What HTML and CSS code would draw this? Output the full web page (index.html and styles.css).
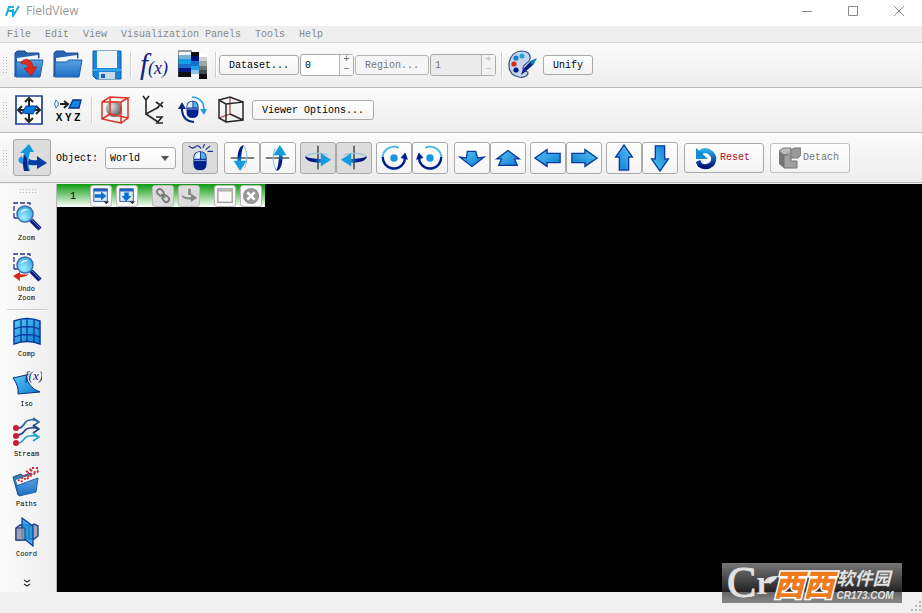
FILE: index.html
```html
<!DOCTYPE html>
<html lang="en">
<head>
<meta charset="utf-8">
<title>FieldView</title>
<link rel="stylesheet" href="styles.css">
</head>
<body>
<svg class="defs" aria-hidden="true">
  <defs>
    <linearGradient id="sky" x1="0" y1="0" x2="1" y2="1"><stop offset="0" stop-color="#5cc8f4"/><stop offset="1" stop-color="#0878d0"/></linearGradient>
    <linearGradient id="folder" x1="0" y1="0" x2="0" y2="1"><stop offset="0" stop-color="#5aa0e0"/><stop offset="1" stop-color="#1c70c8"/></linearGradient>
    <linearGradient id="spin" x1="0" y1="1" x2="1" y2="0"><stop offset="0" stop-color="#001c88"/><stop offset="1" stop-color="#28b0ee"/></linearGradient>
    <linearGradient id="reset" x1="0" y1="1" x2="0" y2="0"><stop offset="0" stop-color="#001478"/><stop offset="1" stop-color="#28a8e8"/></linearGradient>
    <linearGradient id="sweep" x1="0" y1="0" x2="1" y2="0"><stop offset="0" stop-color="#001878"/><stop offset=".6" stop-color="#001e8a"/><stop offset="1" stop-color="#149be0"/></linearGradient>
    <radialGradient id="ball" cx=".35" cy=".35" r=".7"><stop offset="0" stop-color="#e4e4e4"/><stop offset="1" stop-color="#5c5c5c"/></radialGradient>
    <radialGradient id="lens" cx=".4" cy=".7" r=".8"><stop offset="0" stop-color="#9ff0ff"/><stop offset="1" stop-color="#2b9ee4"/></radialGradient>
    <symbol id="bigfolder" viewBox="0 0 30 30">
      <path d="M1 27V3l2-2h8l2 2h12v5h-3l-19 2z" fill="#2a64b0" stroke="#1b4f98"/>
      <path d="M3 8l21-3v7H3z" fill="#eef6ff"/>
      <path d="M2 12h11l3-2h13l-3 17H2z" fill="url(#folder)" stroke="#1d5aa8"/>
    </symbol>
    <symbol id="magnifier" viewBox="0 0 30 30">
      <path d="M2 17V2h16v6M2 17h4" fill="none" stroke="#26308c" stroke-width="1.3" stroke-dasharray="5 2"/>
      <path d="M19 19l9 9" stroke="#0a1c80" stroke-width="4.500"/>
      <path d="M20 19l8 8" stroke="#5878d0"/>
      <circle cx="13" cy="13" r="8" fill="url(#lens)" stroke="#3f6fa8" stroke-width="1.5"/>
      <path d="M8 12q3-6 9-3-4 0-9 3" fill="#d8f6ff"/>
    </symbol>
    <symbol id="arrow" viewBox="0 0 30 30">
      <path d="M1 15L14 6v4h14v10H14v4z" fill="url(#sky)" stroke="#0838a0" stroke-width="1.4"/>
    </symbol>
    <symbol id="orbit" viewBox="0 0 30 30">
      <path d="M15 2v25" stroke="#555" stroke-width="1.800"/>
      <path d="M2 13q10-6 24-1" stroke="#90c4e0" stroke-width="1.200" fill="none"/>
      <path d="M1 13q1 7 18 7v-4Q7 16 1 13z" fill="url(#sweep)"/>
      <path d="M18 10l11 7-11 7z" fill="#149be0"/>
    </symbol>
    <symbol id="turn" viewBox="0 0 30 30">
      <path d="M20 4A12 12 0 1 0 26 19q1-3 1-6" fill="none" stroke="url(#sky)" stroke-width="2"/>
      <path d="M3 14A12 12 0 0 0 26 19l1-7" fill="none" stroke="#001c88" stroke-width="2.400"/>
      <path d="M22 15l5-6 3 8z" fill="#001c88"/>
      <circle cx="15" cy="15" r="4" fill="#1a96e0"/>
    </symbol>
    <symbol id="mouse" viewBox="0 0 20 26">
      <path d="M2 10q0-8 8-8t8 8v7q0 8-8 8t-8-8z" fill="#00248c"/>
      <path d="M3 11V9q1-6 7-6v8z" fill="#d9f2fc"/><path d="M11 3q6 0 6 8h-6z" fill="#54b4e8"/>
      <path d="M3 13h14" stroke="#b0cff0"/>
    </symbol>
  </defs>
</svg>
<div class="window">
  <header class="titlebar">
    <svg class="logo" viewBox="0 0 15 12"><path d="M1 11L4 2h5M3 6h4M8 4L8 11 14 1" fill="none" stroke="#18aede" stroke-width="2"/></svg>
    <h1>FieldView</h1>
    <div class="window-buttons">
      <button aria-label="Minimize"><svg viewBox="0 0 12 12"><path d="M1 6.500h10" /></svg></button>
      <button aria-label="Maximize"><svg viewBox="0 0 12 12"><path d="M1.500 1.500h9v9h-9z"/></svg></button>
      <button aria-label="Close"><svg viewBox="0 0 12 12"><path d="M1 1l10 10M11 1L1 11"/></svg></button>
    </div>
  </header>
  <nav class="menu"><a href="#">File</a><a href="#">Edit</a><a href="#">View</a><a href="#">Visualization Panels</a><a href="#">Tools</a><a href="#">Help</a></nav>

  <div class="toolbar">
    <span class="grip"></span>
    <div class="icons">
      <button class="icon" aria-label="Import data"><svg viewBox="0 0 30 30"><use href="#bigfolder"/><path d="M7 12q6-6 11 1l1 4h4l-6 9-7-8h4q0-5-7-4z" fill="#e0281c" stroke="#a81818" stroke-width=".6"/></svg></button>
      <button class="icon" aria-label="Open"><svg viewBox="0 0 30 30"><use href="#bigfolder"/></svg></button>
      <button class="icon" aria-label="Save"><svg viewBox="0 0 30 30"><path d="M1 1h28v28H4l-3-3z" fill="#1b86d8" stroke="#0a5cae"/><path d="M5 1h20v17H5z" fill="#eff3f5"/><path d="M1 19h28v2H1z" fill="#35a5e8"/><path d="M7 22h16v7H7z" fill="#c9dbe8"/><path d="M9 24h4v4H9z" fill="#1a62b0"/></svg></button>
    </div>
    <span class="sep"></span>
    <div class="icons">
      <button class="icon fx" aria-label="Formula">f<small>(x)</small></button>
      <button class="icon" aria-label="Colormap"><svg viewBox="0 0 30 30"><path d="M0 1h14v4H0z" fill="#eef6fa"/><path d="M0 5h14v4H0z" fill="#7bb0d8"/><path d="M0 9h14v5H0z" fill="#12a0e8"/><path d="M0 14h14v4H0z" fill="#1b70d0"/><path d="M0 18h14v4H0z" fill="#001c88"/><path d="M0 22h14v5H0z" fill="#101014"/><path d="M13 2h8v4h-8z" fill="#101014"/><path d="M13 6h8v5h-8z" fill="#00107c"/><path d="M13 11h8v5h-8z" fill="#1470d0"/><path d="M13 16h8v4h-8z" fill="#20a2e8"/><path d="M13 20h8v4h-8z" fill="#8cc4e8"/><path d="M13 24h8v4h-8z" fill="#f4f8fa"/><path d="M21 3h8v4h-8z" fill="#fff"/><path d="M21 7h8v4h-8z" fill="#d0d0d0"/><path d="M21 11h8v5h-8z" fill="#a0a6a6"/><path d="M21 16h8v4h-8z" fill="#6d7474"/><path d="M21 20h8v4h-8z" fill="#444c4c"/><path d="M21 24h8v5h-8z" fill="#0c0c0c"/><path d="M0 27V1h14" fill="none" stroke="#444"/></svg></button>
    </div>
    <span class="sep"></span>
    <div class="fields">
      <button class="push dataset">Dataset...</button>
      <div class="spinner"><input aria-label="Dataset number" value="0"><div class="steps"><button aria-label="Increase dataset">+</button><button aria-label="Decrease dataset">−</button></div></div>
      <button class="push region" disabled>Region...</button>
      <div class="spinner wide off"><input aria-label="Region number" value="1" disabled><div class="steps"><button aria-label="Increase region" disabled>+</button><button aria-label="Decrease region" disabled>−</button></div></div>
    </div>
    <span class="sep"></span>
    <button class="icon" aria-label="Palette"><svg viewBox="0 0 30 30"><path d="M1 13Q3 2 13 1q10 0 9 8c-1 5-7 4-7 9 0 4 5 2 5 5s-5 5-9 4Q0 25 1 13z" fill="#c8d6ec" stroke="#33508c" stroke-width="1.2"/><circle cx="8" cy="8" r="2.600" fill="#167cd0"/><circle cx="14" cy="6" r="2.500" fill="#1ea2dd"/><circle cx="6" cy="14" r="2.600" fill="#dc2418"/><circle cx="8" cy="20" r="2.600" fill="#001c88"/><path d="M13 25l2-6 8-8 3 3-9 8z" fill="#071e80"/><path d="M22 11l7-3-3 6-2 1z" fill="#167fae"/></svg></button>
    <button class="push unify">Unify</button>
  </div>

  <div class="toolbar">
    <span class="grip"></span>
    <div class="icons">
      <button class="icon" aria-label="Move object"><svg viewBox="0 0 30 30"><path d="M2 1h26v28H2z" fill="#fff" stroke="#203fa0" stroke-width="1.700"/><path d="M15 3v24M4 15h22M11 7l4-4 4 4M11 23l4 4 4-4M8 11l-4 4 4 4M22 11l4 4-4 4" fill="none" stroke="#252525" stroke-width="2"/><path d="M8 18l4-7h11l-4 8z" fill="#087ade" stroke="#063b9c"/></svg></button>
      <button class="icon xyz" aria-label="Align X Y Z"><svg viewBox="0 0 30 15"><path d="M3 3q-3 4 0 8M3 3q5 4 0 8" fill="none" stroke="#2586b8"/><path d="M7 7h7M11 4l4 3-4 4" fill="none" stroke="#222" stroke-width="2"/><path d="M16 11l4-8h8l-2 8z" fill="#1483e4" stroke="#092f86" stroke-width="1.300"/></svg><span>X Y Z</span></button>
    </div>
    <span class="sep"></span>
    <div class="icons">
      <button class="icon" aria-label="Outline"><svg viewBox="0 0 30 30"><circle cx="14" cy="14" r="8" fill="url(#ball)"/><path d="M2 7h19v21L2 24zM2 7l8-5 18 1-7 4M28 3v20l-7 5M10 2v17l-8 5M10 19l18 4" fill="none" stroke="#dc3428" stroke-width="1.500"/></svg></button>
      <button class="icon" aria-label="Axes"><svg viewBox="0 0 30 30"><path d="M7 5v14l13-7M7 19l12 8M4 1l3 4 3-4M17 7l7 5M24 7l-6 6M17 22h6l-5 6h6" fill="none" stroke="#252525" stroke-width="1.600"/></svg></button>
      <button class="icon" aria-label="Mouse rotation"><svg viewBox="0 0 30 30"><use href="#mouse" x="7" y="4" width="15" height="20"/><path d="M26 15q0-12-12-13" fill="none" stroke="#1ba2dd" stroke-width="1.500"/><path d="M22 14h7l-3 6z" fill="#1ba2dd"/><path d="M4 11q-1 15 12 16" fill="none" stroke="#08268a" stroke-width="2"/><path d="M0 14l4-7 4 7z" fill="#08268a"/></svg></button>
      <button class="icon" aria-label="Perspective"><svg viewBox="0 0 30 30"><path d="M2 23l11-4V2" fill="none" stroke="#a04640" stroke-width="1.200"/><path d="M2 23V5l7 4v18zM9 9l17-2v18l-17 2M2 5l11-3 13 5M13 19l13 6" fill="none" stroke="#292929" stroke-width="1.500"/></svg></button>
    </div>
    <button class="push viewer">Viewer Options...</button>
  </div>

  <div class="toolbar transform-bar">
    <span class="grip"></span>
    <button class="tool active axes" aria-label="Transform"><svg viewBox="0 0 30 30"><path d="M5 13q-5 2-3 6 4 4 19 2v-3Q5 20 5 13z" fill="#149be0"/><path d="M8 28Q5 18 7 10H3L12 1l5 8h-4q-3 9 0 19z" fill="#1296e0"/><path d="M7 28q-2-9 0-16 3 1 3 6 0 6 2 10z" fill="#042789"/><path d="M12 16q4 2 8 1v-4l10 7-10 6v-4q-6 1-9-1z" fill="#073da6"/></svg></button>
    <label class="object" for="object">Object:</label>
    <div class="select"><select id="object"><option>World</option></select><svg viewBox="0 0 8 5"><path d="M0 0h8L4 5z" fill="#555"/></svg></div>
    <div class="groups">
      <div><button class="tool active" aria-label="Mouse mode"><svg viewBox="0 0 30 30"><use href="#mouse" x="6" y="6" width="18" height="23"/><path d="M3 2q4 4 7 1t6 2M18 4l2-4M21 6l5-4M23 8h6" fill="none" stroke="#1b348a" stroke-width="1.300"/></svg></button></div>
      <div class="apart"><button class="tool" aria-label="Rotate down"><svg class="quarter" viewBox="0 0 30 30"><use href="#orbit"/></svg></button><button class="tool" aria-label="Rotate up"><svg class="three-quarter" viewBox="0 0 30 30"><use href="#orbit"/></svg></button></div>
      <div><button class="tool active" aria-label="Rotate right"><svg viewBox="0 0 30 30"><use href="#orbit"/></svg></button><button class="tool active" aria-label="Rotate left"><svg class="mirror" viewBox="0 0 30 30"><use href="#orbit"/></svg></button></div>
      <div><button class="tool" aria-label="Rotate counterclockwise"><svg viewBox="0 0 30 30"><use href="#turn"/></svg></button><button class="tool" aria-label="Rotate clockwise"><svg class="mirror" viewBox="0 0 30 30"><use href="#turn"/></svg></button></div>
      <div class="apart"><button class="tool" aria-label="Move nearer"><svg viewBox="0 0 30 30"><path d="M10 8h9l2 7 7-1-13 10L2 14l7 1z" fill="url(#sky)" stroke="#0838a0" stroke-width="1.400"/></svg></button><button class="tool" aria-label="Move farther"><svg viewBox="0 0 30 30"><path d="M15 7l12 9h-5l3 7H5l3-7H3z" fill="url(#sky)" stroke="#0838a0" stroke-width="1.400"/></svg></button></div>
      <div><button class="tool" aria-label="Move left"><svg viewBox="0 0 30 30"><use href="#arrow"/></svg></button><button class="tool" aria-label="Move right"><svg class="mirror" viewBox="0 0 30 30"><use href="#arrow"/></svg></button></div>
      <div><button class="tool" aria-label="Move up"><svg class="quarter" viewBox="0 0 30 30"><use href="#arrow"/></svg></button><button class="tool" aria-label="Move down"><svg class="three-quarter" viewBox="0 0 30 30"><use href="#arrow"/></svg></button></div>
    </div>
    <button class="action reset"><svg viewBox="0 0 24 24"><path d="M6 7q5-5 11 0 5 5 1 11-6 5-12 1l-2-4" fill="none" stroke="url(#reset)" stroke-width="5"/><path d="M2 2v11h12z" fill="#148bd4"/></svg>Reset</button>
    <button class="action" disabled><svg viewBox="0 0 24 24"><path d="M2 5l5 4v13l-5-4z" fill="#777"/><path d="M2 5l4-3h8v5l-7 2z" fill="#bbb" stroke="#777"/><path d="M7 9h7v6h6v7H7z" fill="#a0a0a0" stroke="#717171"/><path d="M14 4l3-2h7v7l-3 3h-7z" fill="#999" stroke="#777"/></svg>Detach</button>
  </div>

  <main class="workspace">
    <aside class="sidebar">
      <span class="grip flat"></span>
      <button class="side"><svg viewBox="0 0 30 30"><use href="#magnifier"/></svg>Zoom</button>
      <button class="side"><svg viewBox="0 0 30 30"><use href="#magnifier"/><path d="M17 22q-4 4-9 3v4l-7-5 7-4v2q4 1 9 0z" fill="#d7281c"/></svg>Undo<br>Zoom</button>
      <hr>
      <button class="side"><svg viewBox="0 0 30 30"><path d="M2 4q13-5 26 0v23q-13-5-26 0z" fill="url(#sky)" stroke="#0638a0" stroke-width="1.500"/><path d="M9 2v23M15 1v23M22 2v23M2 12q13-5 26 0M2 20q13-5 26 0" fill="none" stroke="#0638a0" stroke-width="1.300"/></svg>Comp</button>
      <button class="side"><svg viewBox="0 0 30 30"><path d="M1 11l13-3q2 13 14 17L6 27q1-8-5-16z" fill="url(#sky)" stroke="#082e88"/><text x="13" y="13" class="iso-f">f(x)</text></svg>Iso</button>
      <button class="side"><svg viewBox="0 0 30 30"><g fill="none" stroke-width="1.600"><path d="M6 11c7 1 5-8 12-8q5-1 8 2M21 1l6 4-6 4" stroke="#26669f"/><path d="M6 18c7 0 5-7 12-7q5-1 8 1M21 8l6 4-6 4" stroke="#20448c"/><path d="M6 26c7 0 5-8 12-7q5-1 8 1M21 16l6 4-6 4" stroke="#23a2cc"/></g><g fill="#cb1e34"><circle cx="4" cy="11" r="3"/><circle cx="4" cy="19" r="3"/><circle cx="4" cy="26" r="3"/></g></svg>Stream</button>
      <button class="side"><svg viewBox="0 0 30 30"><path d="M1 10l8-3 2 2 8-3 5 16-18 6z" fill="#397bb9" stroke="#1b518d"/><path d="M4 13l18-6 2 7-18 5z" fill="#fff"/><path d="M4 19l22-8-2 14-17 4z" fill="url(#folder)" stroke="#1c5dab"/><g stroke="#d12836" stroke-width="2" stroke-dasharray="2 2"><path d="M6 14l8-6 6-5M9 15l9-7 8-5M15 12l5-4 7-4" fill="none"/><path d="M14 5l5-3M20 1h6" fill="none"/></g></svg>Paths</button>
      <button class="side"><svg viewBox="0 0 30 30"><path d="M4 11l4-3h9v12l-4 3H4zM17 10l5-3 4 2v10l-4 3h-5z" fill="#a3a8b4" stroke="#263c8b" stroke-width="1.400"/><path d="M10 1l11 8v20l-11-9z" fill="#1396dfcc" stroke="#0637a0" stroke-width="1.200"/><path d="M4 11h9v12H4z" fill="#97a3b2aa" stroke="#243b87"/></svg>Coord</button>
      <button class="more" aria-label="More tools"><svg viewBox="0 0 8 9"><path d="M1 1l3 2 3-2M1 5l3 2 3-2" fill="none" stroke="#333" stroke-width="1.300"/></svg></button>
    </aside>
    <section class="viewport" aria-label="Viewer">
      <div class="view-head">
        <span>1</span>
        <div><button aria-label="Split right"><svg viewBox="0 0 20 20"><path d="M2 2h15v14H2z" fill="#dceaf8" stroke="#234fa0"/><path d="M2 2h15v3H2z" fill="#2461bd"/><path d="M3 8h7V5l6 5-6 5v-3H3z" fill="#0870cf"/><path d="M13 16h6l-3 3z" fill="#222"/></svg></button><button aria-label="Split down"><svg viewBox="0 0 20 20"><path d="M2 2h15v14H2z" fill="#dceaf8" stroke="#234fa0"/><path d="M2 2h15v3H2z" fill="#2461bd"/><path d="M7 6h5v4h3l-6 6-5-6h3z" fill="#0870cf"/><path d="M13 16h6l-3 3z" fill="#222"/></svg></button></div>
        <div><button class="gray" aria-label="Link" disabled><svg viewBox="0 0 20 20"><g fill="none" stroke="#777" stroke-width="2"><rect x="3" y="3" width="8" height="6" rx="3" transform="rotate(45 7 6)"/><rect x="9" y="10" width="8" height="6" rx="3" transform="rotate(45 13 13)"/><path d="M8 8l4 4"/></g></svg></button><button class="gray" aria-label="Linked rotation" disabled><svg viewBox="0 0 20 20"><path d="M9 2h3v7H9zM2 9q3 3 10 2V7l7 5-7 5v-3Q2 14 2 9z" fill="#888"/></svg></button></div>
        <div><button aria-label="Maximize view"><svg viewBox="0 0 20 20"><path d="M2 2h16v15H2z" fill="#f8f8f8" stroke="#999" stroke-width="1.400"/><path d="M2 4h16" stroke="#aaa" stroke-width="2"/></svg></button><button aria-label="Close view"><svg viewBox="0 0 20 20"><circle cx="10" cy="10" r="9" fill="#999"/><path d="M6 6l8 8M14 6l-8 8" stroke="#fff" stroke-width="3"/></svg></button></div>
      </div>
    </section>
  </main>
  <footer class="status"><svg viewBox="0 0 12 12"><path d="M9 1h2M9 5h2M9 9h2M5 5h2M5 9h2M1 9h2" stroke="#b5b5b5" stroke-width="2"/></svg></footer>
  <div class="watermark" lang="zh">
    <span class="mark-c">C</span><span class="mark-r">r</span><svg class="leaf" viewBox="0 0 14 9"><path d="M0 8Q2 0 14 1 9 10 0 8" fill="#e2e2e2"/></svg><strong>西西</strong><div><b>软件园</b><span>CR173.COM</span></div>
  </div>
</div>
</body>
</html>
```
FILE: styles.css
```css
* { box-sizing: border-box; }
body { margin: 0; background: #f0f0f0; font: 10px/12px "Liberation Mono", "DejaVu Sans Mono", monospace; color: #000; }
button, input, select { margin: 0; padding: 0; border: 0; background: none; font: inherit; color: inherit; }
svg { display: block; }
.defs { position: absolute; width: 0; height: 0; }
.window { position: relative; display: flex; flex-direction: column; min-height: 100vh; }

.titlebar { display: flex; align-items: center; height: 26px; padding: 0 0 4px 5px; background: #fff; color: #999; }
.logo { width: 15px; height: 12px; }
.titlebar h1 { margin: 0 0 0 6px; font: 12px/16px "Open Sans", sans-serif; }
.window-buttons { display: flex; margin-left: auto; }
.window-buttons button { display: grid; place-items: center; width: 46px; height: 20px; }
.window-buttons svg { width: 12px; height: 12px; fill: none; stroke: #888; }

.menu { display: flex; gap: 14px; height: 17px; padding: 3px 7px 0; border-bottom: 1px solid #d5d5d5; background: #efefef; }
.menu a { color: #888; text-decoration: none; }

.toolbar { display: flex; align-items: center; height: 45px; padding-left: 2px; border-bottom: 1px solid #b8b8b8; background: linear-gradient(#fbfbfb, #eeeeee); }
.transform-bar { height: 50px; }
.grip { flex: none; width: 6px; height: 18px; margin-right: 6px; background: radial-gradient(circle, #bbb 0 1px, transparent 1px) 0 0 / 3px 3px; }
.icons { display: flex; gap: 9px; }
.icon { flex: none; width: 30px; height: 30px; }
.icon svg { width: 30px; height: 30px; }
.sep { flex: none; width: 2px; height: 26px; margin: 0 7px 0 8px; border-left: 1px solid #d0d0d0; background: #fff; }
.sep:has(+ .fields) { margin: 0 2px 0 7px; }
.fields + .sep { margin: 0 5px; }
.fx { font: italic 29px/28px "Liberation Serif", serif; color: #102184; white-space: nowrap; }
.fx small { font-size: 18px; }
.icon.xyz { font: bold 10px/12px "Liberation Sans", sans-serif; }
.icon.xyz svg { height: 15px; }
.icon.xyz span { display: block; }

.push { height: 20px; padding-top: 2px; border: 1px solid #aaa; border-radius: 3px; background: linear-gradient(#fff, #f3f3f3); }
.push:disabled { color: #777; border-color: #b5b5b5; background: #f5f5f5; }
.dataset { width: 80px; }
.region { width: 74px; }
.unify { width: 50px; margin-left: 5px; }
.viewer { width: 122px; margin-left: 5px; }
.fields { display: flex; align-items: center; gap: 1px; }
.spinner { display: flex; width: 54px; height: 22px; border: 1px solid #aaa; border-radius: 3px; background: #fff; }
.spinner.wide { width: 66px; }
.spinner input { flex: 1; min-width: 0; padding: 2px 0 0 4px; }
.steps { display: flex; flex-direction: column; width: 14px; border-left: 1px solid #b5b5b5; color: #666; background: #f8f8f8; }
.steps button { height: 10px; line-height: 10px; }
.spinner.off { background: #ebebeb; color: #777; }
.off .steps { color: #bbb; background: #f2f2f2; }

.tool { display: grid; place-items: center; width: 36px; height: 32px; border: 1px solid #aaa; border-radius: 3px; background: linear-gradient(#fff, #f4f4f4); }
.tool svg { width: 28px; height: 28px; }
.tool.active { background: #dcdcdc; }
.tool.axes { width: 38px; height: 37px; margin-left: -1px; }
.axes svg { width: 30px; height: 30px; }
.mirror { transform: scaleX(-1); }
.quarter { transform: rotate(90deg); }
.three-quarter { transform: rotate(-90deg); }
.object { margin-left: 5px; padding-top: 2px; }
.select { position: relative; margin-left: 7px; }
.select select { width: 71px; height: 22px; padding: 2px 0 0 4px; appearance: none; border: 1px solid #aaa; border-radius: 3px; background: linear-gradient(#fff, #f5f5f5); }
.select svg { position: absolute; top: 9px; right: 7px; width: 8px; height: 5px; pointer-events: none; }
.groups { display: flex; gap: 4px; margin-left: 6px; }
.groups div { display: flex; }
.groups .apart { margin-left: 2px; }
.action { display: flex; align-items: center; justify-content: center; gap: 2px; width: 80px; height: 30px; margin-left: 6px; padding-right: 4px; border: 1px solid #aaa; border-radius: 3px; background: linear-gradient(#fff, #f3f3f3); }
.action svg { width: 24px; height: 24px; }
.action:disabled { color: #777; border-color: #c0c0c0; }
.reset { color: #b80c18; }

.workspace { display: flex; flex: 1; padding-top: 1px; }
.sidebar { display: flex; flex-direction: column; align-items: center; width: 57px; padding: 4px 3px 0 0; border-right: 1px solid #b8b8b8; background: linear-gradient(90deg, #fbfbfb, #eeeeee); }
.grip.flat { width: 18px; height: 6px; margin: 0 0 6px 2px; }
.side { display: block; flex: none; width: 46px; height: 50px; padding-bottom: 7px; font-size: 7px; line-height: 9px; }
.side svg { width: 30px; height: 30px; margin: 0 auto 3px; }
.side:has(br) { height: 56px; padding: 0 0 2px; }
.iso-f { font: italic 13px "Liberation Serif", serif; fill: #12207e; }
.sidebar hr { width: 40px; height: 2px; margin: 3px 0 5px; border: 0; border-top: 1px solid #ccc; background: #fff; }
.more { margin: 13px 0 4px; }
.more svg { width: 8px; height: 9px; }
.viewport { flex: 1; background: #000; }
.view-head { display: flex; align-items: center; gap: 14px; width: max-content; height: 23px; padding-right: 3px; background: linear-gradient(#0b9a0b, #fff); }
.view-head span { width: 19px; padding-top: 2px; text-align: right; }
.view-head div { display: flex; gap: 4px; }
.view-head button { display: grid; place-items: center; width: 22px; height: 22px; border: 1px solid #bbb; border-radius: 3px; background: #f8f8f8; }
.view-head .gray { background: #dcdcdc; }
.view-head svg { width: 18px; height: 18px; }
.status { display: flex; align-items: flex-end; justify-content: flex-end; height: 21px; background: #f0f0f0; }
.status svg { width: 12px; height: 12px; }

.watermark { position: absolute; right: 20px; bottom: 10px; display: flex; align-items: center; width: 180px; height: 40px; padding-left: 5px; background: linear-gradient(#777, #222 72%, #666 73%, #888); color: #e2e2e2; white-space: nowrap; }
.mark-c { font: 44px/40px "Liberation Serif", serif; -webkit-text-stroke: 1px #e2e2e2; }
.mark-r { font: bold 34px/40px "Liberation Serif", serif; }
.leaf { position: absolute; left: 42px; top: 12px; width: 14px; height: 9px; }
.watermark strong { margin-left: 2px; font: italic 900 30px/36px "Noto Sans CJK SC", sans-serif; color: #ee7b1e; -webkit-text-stroke: 3px #fff; paint-order: stroke fill; }
.watermark div { margin-left: 3px; }
.watermark b { display: block; font: italic bold 18px/26px "Noto Sans CJK SC", sans-serif; }
.watermark div span { display: block; font: italic bold 10px/12px "Liberation Sans", sans-serif; }
```
